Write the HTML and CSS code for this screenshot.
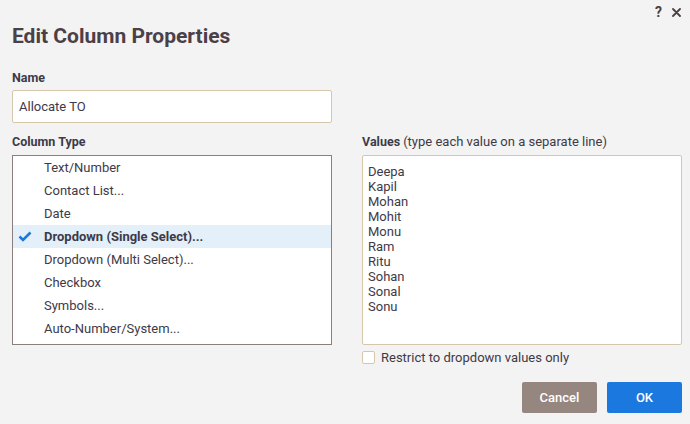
FILE: index.html
```html
<!DOCTYPE html>
<html>
<head>
<meta charset="utf-8">
<link rel="stylesheet" href="styles.css">
</head>
<body>
<div class="dialog">
  <div class="topbar">
    <span class="icon-help">?</span>
    <svg class="icon-close" width="9" height="9" viewBox="0 0 9 9"><path d="M1 1L8 8M8 1L1 8" stroke="#4b4048" stroke-width="1.8" stroke-linecap="round"/></svg>
  </div>
  <h1 class="title">Edit Column Properties</h1>
  <div class="label name-label">Name</div>
  <div class="text-input">Allocate TO</div>
  <div class="columns">
    <div class="col">
      <div class="label">Column Type</div>
      <ul class="type-list">
        <li class="item">Text/Number</li>
        <li class="item">Contact List...</li>
        <li class="item">Date</li>
        <li class="item selected">
          <svg class="check" width="14" height="11" viewBox="0 0 14 11"><path d="M1.5 5.5L5 9L12.5 1.5" fill="none" stroke="#1a78de" stroke-width="2.6"/></svg>
          Dropdown (Single Select)...
        </li>
        <li class="item">Dropdown (Multi Select)...</li>
        <li class="item">Checkbox</li>
        <li class="item">Symbols...</li>
        <li class="item">Auto-Number/System...</li>
      </ul>
    </div>
    <div class="col">
      <div class="label">Values <span class="hint">(type each value on a separate line)</span></div>
      <div class="values">Deepa
Kapil
Mohan
Mohit
Monu
Ram
Ritu
Sohan
Sonal
Sonu</div>
      <label class="restrict"><span class="box"></span>Restrict to dropdown values only</label>
    </div>
  </div>
  <div class="footer">
    <button class="btn cancel">Cancel</button>
    <button class="btn ok">OK</button>
  </div>
</div>
</body>
</html>
```

FILE: styles.css
```css
* { box-sizing: border-box; }
html, body {
  margin: 0;
  padding: 0;
  background: #f3f3f3;
}
body {
  font-family: Roboto, "Liberation Sans", sans-serif;
  color: #3e3a48;
  width: 690px;
  height: 424px;
  overflow: hidden;
}
.dialog {
  padding: 0 8px 0 12px;
}
.topbar {
  display: flex;
  justify-content: flex-end;
  align-items: center;
  gap: 10px;
  height: 22px;
  padding-top: 2px;
  padding-right: 0;
}
.icon-help {
  font-size: 14px;
  font-weight: 700;
  color: #4b4048;
  line-height: 1;
}
.icon-close { display: block; margin-right: 1px; }
.title {
  margin: 1px 0 0 0;
  font-size: 21px;
  font-weight: 700;
  color: #4b4048;
  line-height: 26px;
  height: 26px;
}
.label {
  font-size: 12.5px;
  font-weight: 700;
  color: #3e3a48;
  line-height: 16px;
}
.hint {
  font-weight: 400;
  font-size: 13px;
}
.name-label {
  margin-top: 21px;
}
.text-input {
  margin-top: 4px;
  width: 320px;
  height: 33px;
  background: #fff;
  border: 1px solid #d6c6ab;
  border-radius: 2px;
  padding: 0 6px;
  line-height: 31px;
  font-size: 13px;
  color: #3e3a48;
}
.columns {
  display: grid;
  grid-template-columns: 320px 320px;
  column-gap: 30px;
  margin-top: 11px;
}
.col .label {
  margin-bottom: 5px;
}
.type-list {
  list-style: none;
  margin: 0;
  padding: 0 0 5px 0;
  height: 190px;
  background: #fff;
  border: 1px solid #8c7f79;
}
.item {
  position: relative;
  height: 23px;
  line-height: 23px;
  padding-left: 31px;
  font-size: 13px;
  color: #3e3a48;
}
.item.selected {
  background: #e3f0fa;
  font-weight: 700;
}
.check {
  position: absolute;
  left: 5px;
  top: 6px;
}
.values {
  height: 190px;
  background: #fff;
  border: 1px solid #d6c6ab;
  border-radius: 2px;
  padding: 8px 5px;
  white-space: pre;
  font-size: 13px;
  line-height: 15px;
  color: #3e3a48;
}
.restrict {
  display: flex;
  align-items: center;
  gap: 6px;
  margin-top: 5px;
  font-size: 13px;
  color: #3e3a48;
  height: 14px;
}
.box {
  width: 13px;
  height: 13px;
  border: 1px solid #d6c6ab;
  border-radius: 2px;
  background: #fff;
}
.footer {
  display: flex;
  justify-content: flex-end;
  gap: 10px;
  margin-top: 18px;
}
.btn {
  width: 75px;
  height: 31px;
  border: none;
  border-radius: 2px;
  color: #fff;
  font-family: Roboto, "Liberation Sans", sans-serif;
  font-size: 13px;
  font-weight: 500;
  padding: 0;
}
.cancel { background: #958680; }
.ok { background: #1a78de; }
```
